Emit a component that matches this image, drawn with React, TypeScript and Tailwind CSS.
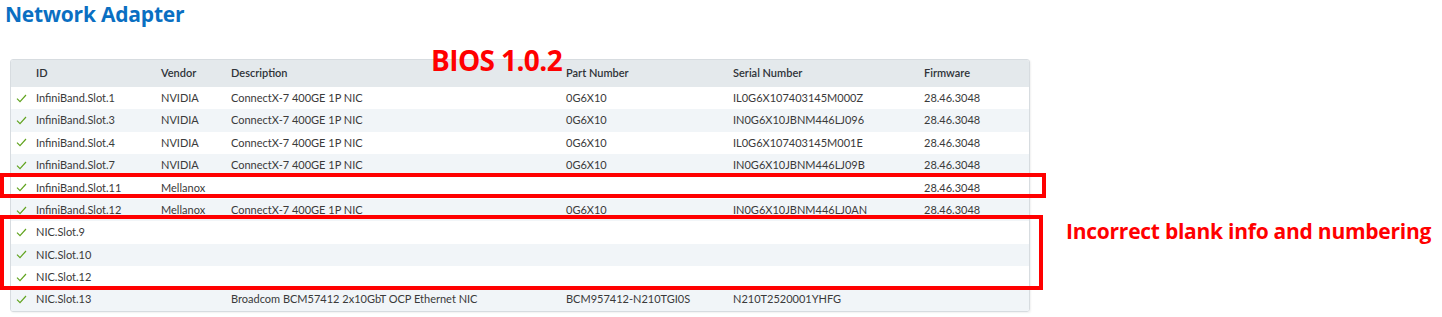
const rows = [
  { id: "InfiniBand.Slot.1", vendor: "NVIDIA", desc: "ConnectX-7 400GE 1P NIC", part: "0G6X10", serial: "IL0G6X107403145M000Z", fw: "28.46.3048" },
  { id: "InfiniBand.Slot.3", vendor: "NVIDIA", desc: "ConnectX-7 400GE 1P NIC", part: "0G6X10", serial: "IN0G6X10JBNM446LJ096", fw: "28.46.3048" },
  { id: "InfiniBand.Slot.4", vendor: "NVIDIA", desc: "ConnectX-7 400GE 1P NIC", part: "0G6X10", serial: "IL0G6X107403145M001E", fw: "28.46.3048" },
  { id: "InfiniBand.Slot.7", vendor: "NVIDIA", desc: "ConnectX-7 400GE 1P NIC", part: "0G6X10", serial: "IN0G6X10JBNM446LJ09B", fw: "28.46.3048" },
  { id: "InfiniBand.Slot.11", vendor: "Mellanox", desc: "", part: "", serial: "", fw: "28.46.3048" },
  { id: "InfiniBand.Slot.12", vendor: "Mellanox", desc: "ConnectX-7 400GE 1P NIC", part: "0G6X10", serial: "IN0G6X10JBNM446LJ0AN", fw: "28.46.3048" },
  { id: "NIC.Slot.9", vendor: "", desc: "", part: "", serial: "", fw: "" },
  { id: "NIC.Slot.10", vendor: "", desc: "", part: "", serial: "", fw: "" },
  { id: "NIC.Slot.12", vendor: "", desc: "", part: "", serial: "", fw: "" },
  { id: "NIC.Slot.13", vendor: "", desc: "Broadcom BCM57412 2x10GbT OCP Ethernet NIC", part: "BCM957412-N210TGI0S", serial: "N210T2520001YHFG", fw: "" },
];

// column widths follow the screenshot (table starts at x=10)
const cols = "grid grid-cols-[25px_125px_70px_335px_167px_191px_1fr]";

const Check = () => (
  <svg width="11" height="9" viewBox="0 0 11 9" className="ml-[5px]">
    <path d="M1 4.6 L4 7.6 L10 1" fill="none" stroke="#62a420" strokeWidth="1.2" />
  </svg>
);

const App = () => {
  return (
    <div className="relative w-[1442px] h-[317px] bg-white overflow-hidden font-['Lato','Open_Sans',sans-serif]">
      <h1 className="pl-[5px] pt-[1px] text-[21px] leading-[26px] font-bold text-[#0a6fc2] font-['Open_Sans',sans-serif] tracking-[-0.2px]">
        Network Adapter
      </h1>

      <div className="ml-[10px] mt-[32px] w-[1020px] border border-[#d7dce0] rounded-[3px] shadow-[1px_1px_2px_rgba(0,0,0,0.06)] overflow-hidden text-[11px] text-[#3a3a3a]">
        <div className={cols + " h-[27px] items-center bg-[#e4e9ec] font-semibold text-[#2f3338]"}>
          <div />
          <div>ID</div>
          <div>Vendor</div>
          <div>Description</div>
          <div>Part Number</div>
          <div>Serial Number</div>
          <div>Firmware</div>
        </div>
        {rows.map((r, i) => (
          <div
            key={r.id}
            className={cols + " h-[22.4px] items-center " + (i % 2 === 0 ? "bg-white" : "bg-[#f1f5f8]")}
          >
            <Check />
            <div>{r.id}</div>
            <div>{r.vendor}</div>
            <div>{r.desc}</div>
            <div>{r.part}</div>
            <div>{r.serial}</div>
            <div>{r.fw}</div>
          </div>
        ))}
      </div>

      {/* annotations drawn over the screenshot */}
      <div className="absolute left-[431px] top-[42px] text-[28px] leading-[36px] font-bold text-[#ff0000] font-['Open_Sans',sans-serif] tracking-[-0.6px]">
        BIOS 1.0.2
      </div>
      <div className="absolute left-0 top-[173px] w-[1046px] h-[25px] border-4 border-[#ff0000]" />
      <div className="absolute left-0 top-[215px] w-[1043px] h-[75px] border-4 border-[#ff0000]" />
      <div className="absolute left-[1066px] top-[216px] text-[21px] leading-[30px] font-bold text-[#ff0000] font-['Open_Sans',sans-serif] tracking-[-0.25px]">
        Incorrect blank info and numbering
      </div>
    </div>
  );
};

export default App;
